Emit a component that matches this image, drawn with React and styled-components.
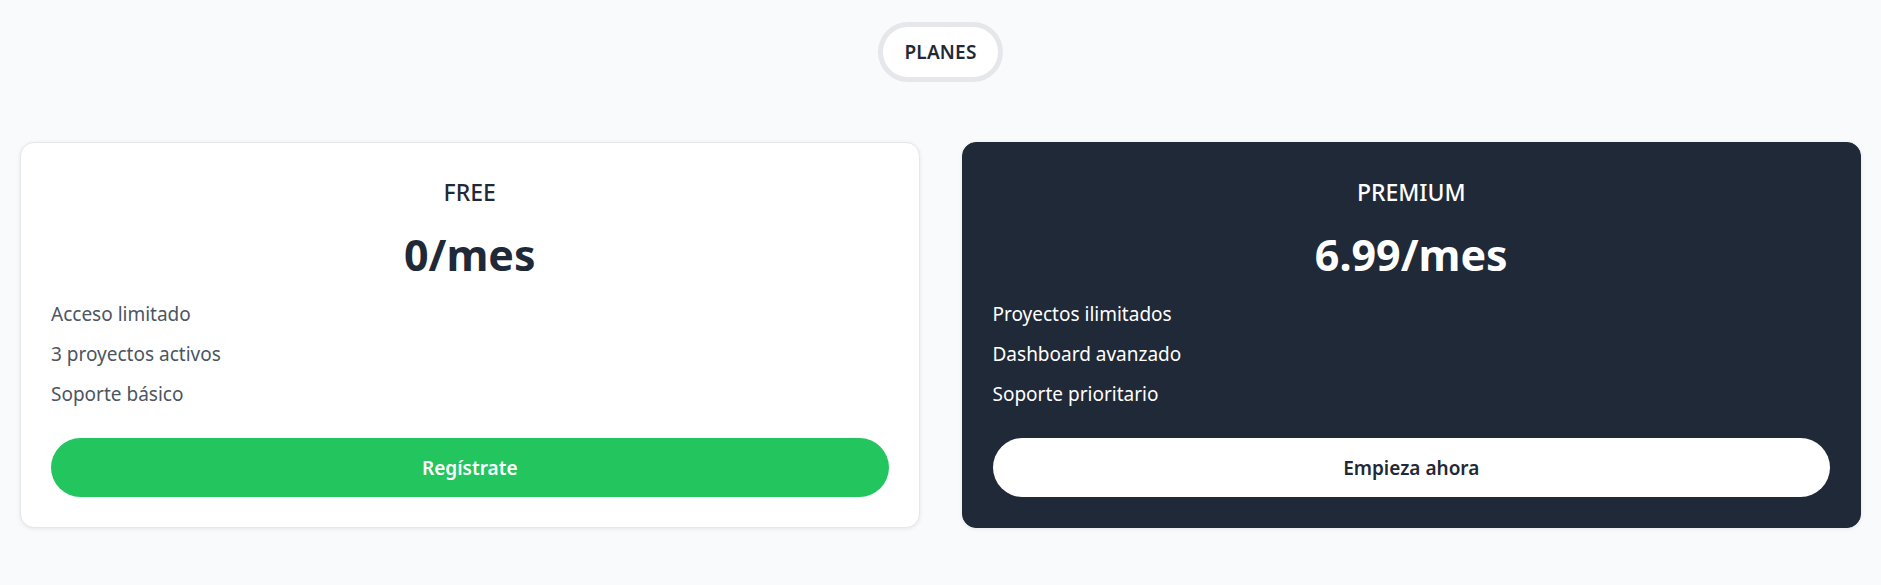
import React from 'react';
import styled, { createGlobalStyle } from 'styled-components';

const GlobalStyle = createGlobalStyle`
  * {
    box-sizing: border-box;
  }

  body {
    margin: 0;
    background: #f9fafb;
    font-family: 'Noto Sans', 'Open Sans', Arial, sans-serif;
    color: #1f2937;
  }
`;

const Page = styled.main`
  min-height: 585px;
  padding: 22px 20px 0;
  display: flex;
  flex-direction: column;
  align-items: center;
`;

const Badge = styled.div`
  height: 60px;
  padding: 0 21px;
  display: flex;
  align-items: center;
  border: 5px solid #e5e7eb;
  border-radius: 999px;
  background: #ffffff;
  font-size: 19px;
  font-weight: 600;
  color: #1f2937;
  letter-spacing: 0.2px;
`;

const Grid = styled.section`
  width: 100%;
  margin-top: 60px;
  display: grid;
  grid-template-columns: 1fr 1fr;
  gap: 42px;
`;

const Card = styled.article`
  height: 386px;
  padding: 30px 30px 30px 30px;
  display: flex;
  flex-direction: column;
  border-radius: 14px;
  background: ${(p) => (p.$dark ? '#1f2937' : '#ffffff')};
  border: 1px solid ${(p) => (p.$dark ? '#1f2937' : '#e5e7eb')};
  box-shadow: 0 1px 4px rgba(0, 0, 0, 0.08);
  color: ${(p) => (p.$dark ? '#ffffff' : '#1f2937')};
`;

const Title = styled.h2`
  margin: 3px 0 0;
  font-size: 23px;
  line-height: 32px;
  font-weight: 500;
  text-align: center;
`;

const Price = styled.div`
  margin-top: 21px;
  font-size: 43px;
  line-height: 52px;
  font-weight: 700;
  text-align: center;
`;

const Features = styled.ul`
  margin: 13px 0 0;
  padding: 0;
  list-style: none;
`;

const Feature = styled.li`
  font-size: 19px;
  line-height: 40px;
  color: ${(p) => (p.$dark ? '#ffffff' : '#4b5563')};
`;

const Action = styled.button`
  margin-top: 24px;
  height: 60px;
  width: 100%;
  border: none;
  border-radius: 999px;
  font-family: inherit;
  font-size: 19px;
  font-weight: 600;
  cursor: pointer;
  background: ${(p) => (p.$dark ? '#ffffff' : '#22c55e')};
  color: ${(p) => (p.$dark ? '#1f2937' : '#ffffff')};
`;

const plans = [
  {
    name: 'FREE',
    price: '0/mes',
    features: ['Acceso limitado', '3 proyectos activos', 'Soporte básico'],
    cta: 'Regístrate',
    dark: false,
  },
  {
    name: 'PREMIUM',
    price: '6.99/mes',
    features: ['Proyectos ilimitados', 'Dashboard avanzado', 'Soporte prioritario'],
    cta: 'Empieza ahora',
    dark: true,
  },
];

const App = () => (
  <>
    <GlobalStyle />
    <Page>
      <Badge>PLANES</Badge>
      <Grid>
        {plans.map((plan) => (
          <Card key={plan.name} $dark={plan.dark}>
            <Title>{plan.name}</Title>
            <Price>{plan.price}</Price>
            <Features>
              {plan.features.map((f) => (
                <Feature key={f} $dark={plan.dark}>
                  {f}
                </Feature>
              ))}
            </Features>
            <Action $dark={plan.dark}>{plan.cta}</Action>
          </Card>
        ))}
      </Grid>
    </Page>
  </>
);

export default App;
